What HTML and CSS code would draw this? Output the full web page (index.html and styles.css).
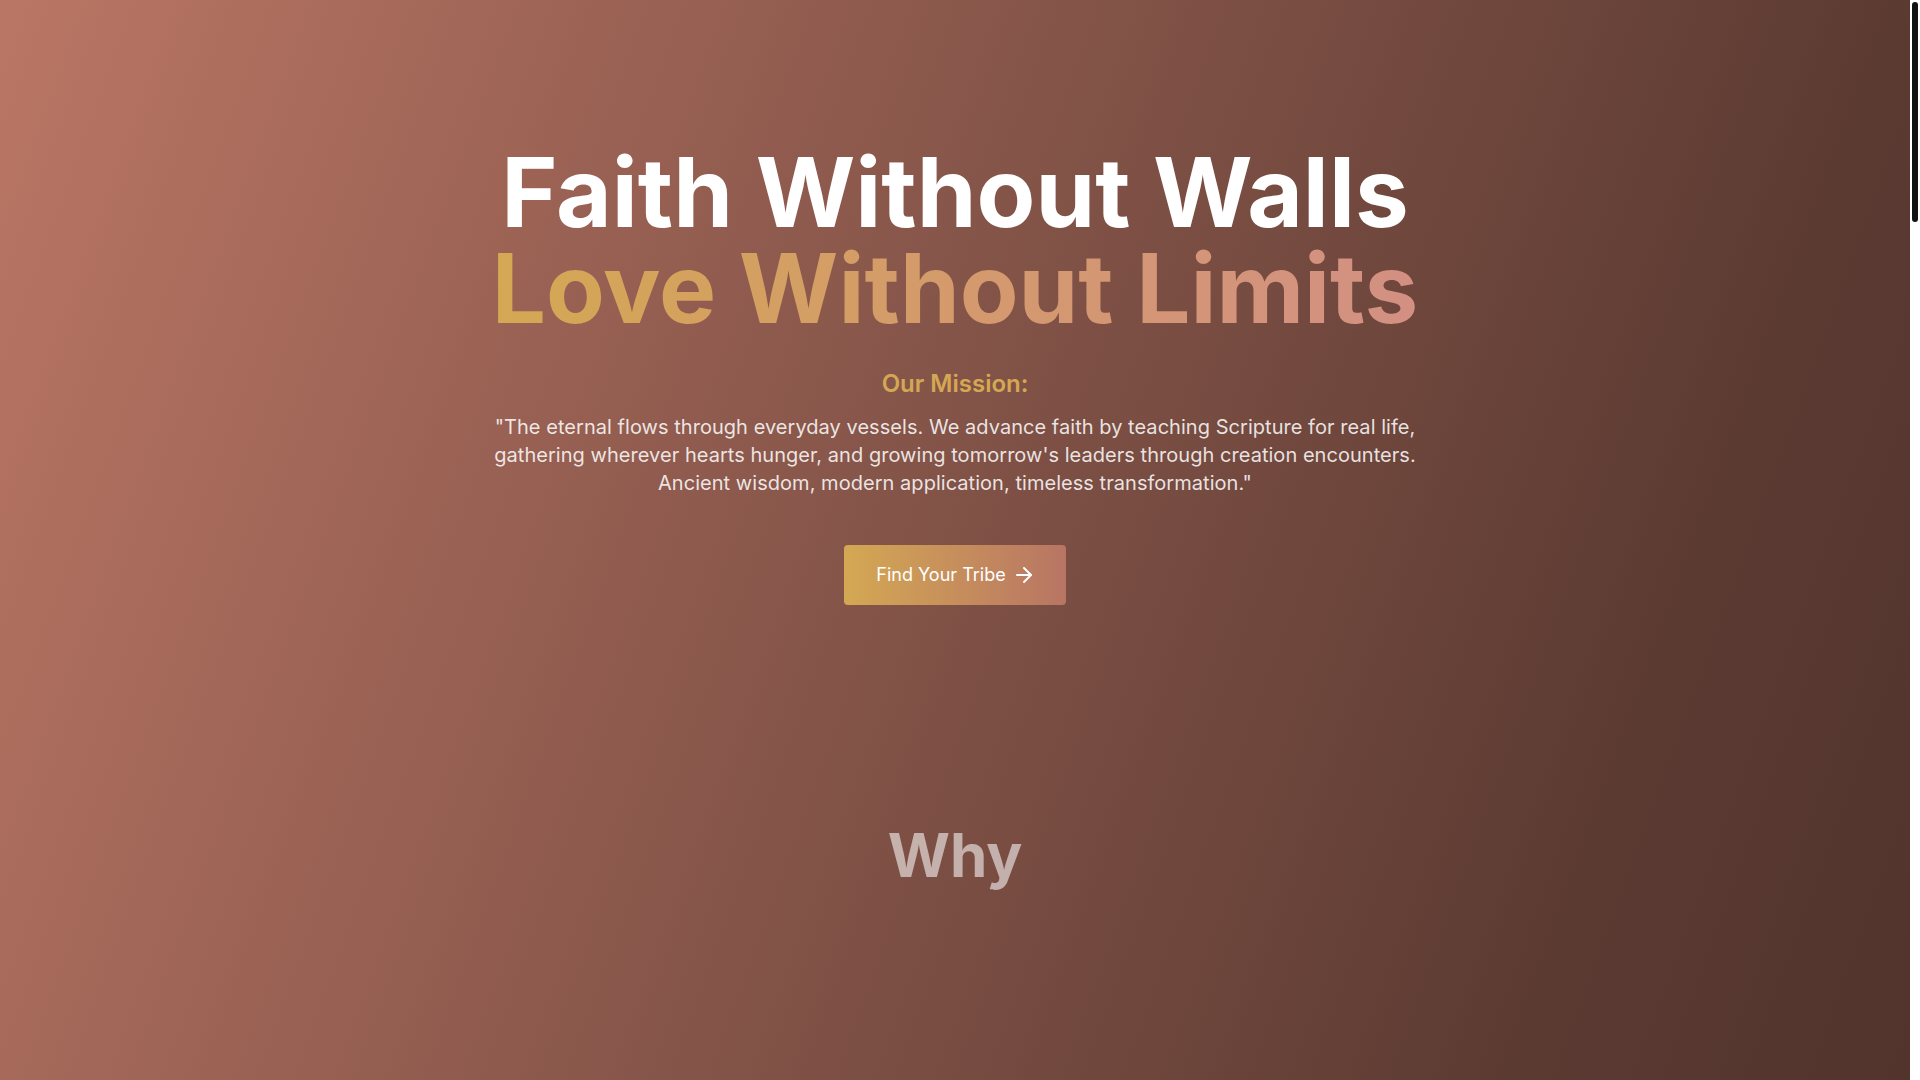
FILE: index.html
```html
<!DOCTYPE html>
<html lang="en">
<head>
<meta charset="utf-8">
<title>Faith Without Walls</title>
<link rel="stylesheet" href="styles.css">
</head>
<body>
<div class="page">
  <section class="hero">
    <h1 class="title">
      <span class="title-line">Faith Without Walls</span>
      <span class="title-line title-accent">Love Without Limits</span>
    </h1>
    <h2 class="mission-label">Our Mission:</h2>
    <p class="mission-text">"The eternal flows through everyday vessels. We advance faith by teaching Scripture for real life, gathering wherever hearts hunger, and growing tomorrow's leaders through creation encounters. Ancient wisdom, modern application, timeless transformation."</p>
    <a class="cta" href="#why">Find Your Tribe
      <svg class="cta-icon" viewBox="0 0 24 24" fill="none" stroke="currentColor" stroke-width="2" stroke-linecap="round" stroke-linejoin="round"><path d="M5 12h14"/><path d="m12 5 7 7-7 7"/></svg>
    </a>
  </section>
  <section class="why" id="why">
    <h2 class="why-title">Why</h2>
  </section>
</div>
<div class="scrollbar" aria-hidden="true"><div class="scrollbar-thumb"></div></div>
</body>
</html>
```
FILE: styles.css
```css
html, body {
  margin: 0;
  padding: 0;
  background: #ffffff;
}
body {
  font-family: Inter, "Noto Sans", sans-serif;
  color: #ffffff;
}
.page {
  margin-right: 10px;
  min-height: 5254px;
  background: linear-gradient(to bottom right, #ba7665 0%, #5b3a32 50%, #2e1c18 100%);
  display: flex;
  flex-direction: column;
  align-items: center;
}
.scrollbar {
  position: fixed;
  top: 0;
  right: 0;
  width: 10px;
  height: 100vh;
  background: #ffffff;
}
.scrollbar-thumb {
  position: absolute;
  top: 2px;
  left: 2px;
  width: 6px;
  height: 220px;
  border-radius: 3px;
  background: #111111;
}
.hero {
  display: flex;
  flex-direction: column;
  align-items: center;
  text-align: center;
  padding-top: 144px;
  width: 100%;
}
.title {
  margin: 0 0 32px;
  font-size: 96px;
  line-height: 1;
  font-weight: 700;
  letter-spacing: 0;
  display: flex;
  flex-direction: column;
  align-items: center;
}
.title-line {
  display: block;
}
.title-accent {
  display: inline-block;
  background: linear-gradient(90deg, #d4a853 0%, #d49a6c 50%, #d39083 100%);
  -webkit-background-clip: text;
  background-clip: text;
  color: transparent;
}
.mission-label {
  margin: 0 0 13px;
  font-size: 24px;
  line-height: 32px;
  font-weight: 600;
  color: #d4a853;
}
.mission-text {
  margin: 0 0 48px;
  max-width: 940px;
  font-size: 20px;
  line-height: 28px;
  font-weight: 400;
  letter-spacing: 0.002em;
  color: rgba(255, 255, 255, 0.85);
}
.cta {
  display: inline-flex;
  align-items: center;
  gap: 6px;
  padding: 16px 30px 16px 32px;
  border-radius: 4px;
  background: linear-gradient(90deg, #d4a853 0%, #b87564 100%);
  color: #ffffff;
  text-decoration: none;
  font-size: 18px;
  line-height: 28px;
  font-weight: 400;
}
.cta-icon {
  width: 24px;
  height: 24px;
}
.why {
  width: 100%;
  padding-top: 220px;
  display: flex;
  justify-content: center;
}
.why-title {
  margin: 0;
  font-size: 60px;
  line-height: 60px;
  font-weight: 700;
  color: rgba(255, 255, 255, 0.56);
}
```
